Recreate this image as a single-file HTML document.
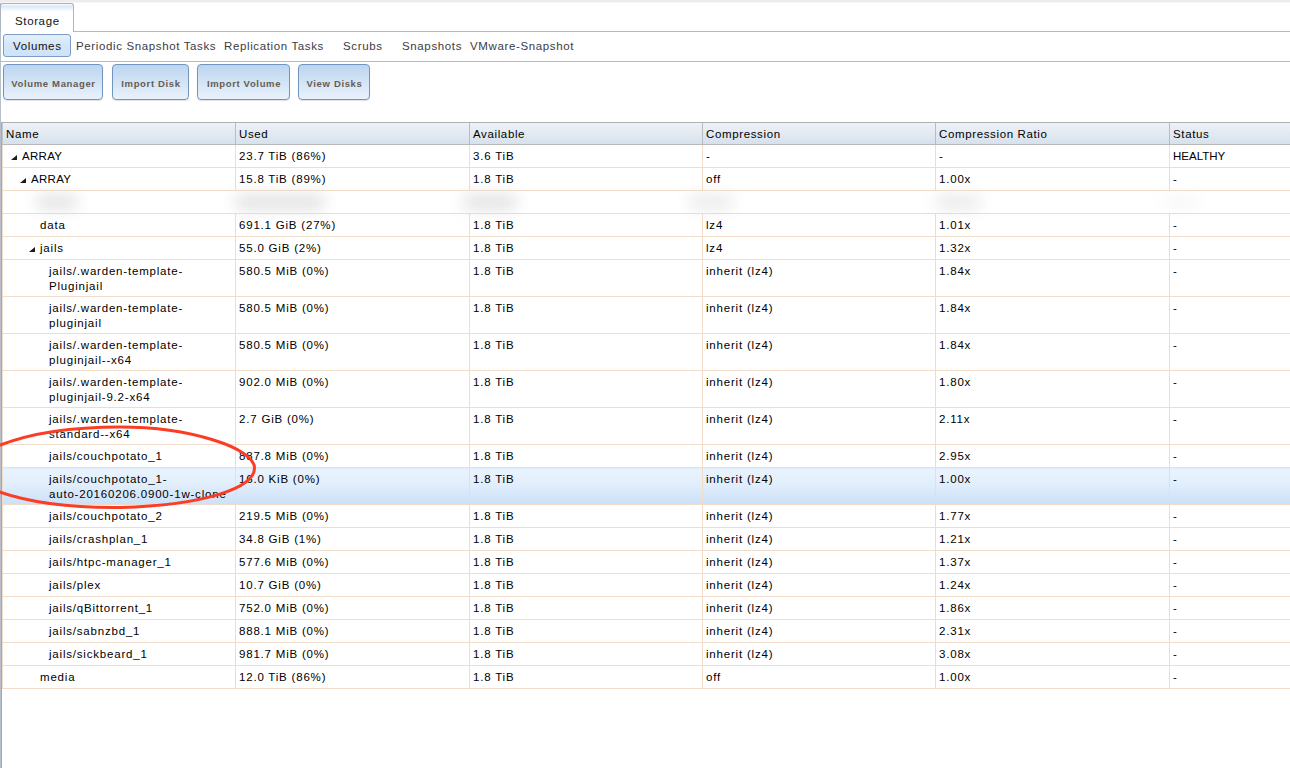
<!DOCTYPE html><html><head><meta charset="utf-8"><style>
*{margin:0;padding:0;box-sizing:border-box}
html,body{width:1290px;height:768px;overflow:hidden;background:#fff}
body{position:relative;font-family:"Liberation Sans",sans-serif;font-size:11.5px;letter-spacing:0.63px;color:#000}
.a{position:absolute;white-space:nowrap}
.topstrip{left:0;top:0;width:1290px;height:3px;background:linear-gradient(#ededed 2px,#f6f6f6 2px)}
.lbar{left:0;top:3px;width:1px;height:765px;background:#b6bfcc}
.tborder{left:1px;top:122px;width:1px;height:646px;background:#a8a8a8}
.tabline{left:73px;top:31px;width:1217px;height:1px;background:#b3bac4}
.tab{left:0px;top:3px;width:74px;height:29px;border:1px solid #aab4c2;border-bottom:none;border-radius:3px 3px 0 0;background:linear-gradient(#fff 0,#d9e8f8 2px,#f3f8fd 6px,#fff 8px,#fff)}
.tabtxt{left:15px;top:15px;color:#111}
.subline{left:0;top:61px;width:1290px;height:1px;background:#b3bac4}
.vol{left:3px;top:34px;width:68px;height:23px;border:1px solid #7b9dc6;border-radius:3px;background:linear-gradient(#e6f0fc,#d4e6f8 45%,#cfe2f7)}
.nav{top:40px;color:#3c3c44}
.btn{top:64px;padding-left:1px;height:36px;border:1px solid #7096c0;border-radius:4px;background:linear-gradient(#bcd5ef,#e9f2fc);box-shadow:0 1px 1px rgba(0,0,0,.12);font-weight:bold;font-size:9.5px;letter-spacing:0.65px;color:#665c52;text-align:center;line-height:38px}
.hdr{left:2px;top:122px;width:1288px;height:23px;border-top:1px solid #b0b0b0;border-bottom:1px solid #b8b8b8;background:linear-gradient(#eef2f9,#d7e1eb)}
.hsep{top:123px;width:1px;height:21px;background:#b9bcc1}
.htxt{top:128px;color:#000}
.rl{left:2px;width:1288px;height:1px;background:#f0dcc8}
.cl{width:1px;background:#f0dcc8}
.sel{left:2px;width:1288px;background:linear-gradient(#dcebfa 0,#e9f3fd 2px,#e3effc 40%,#cce1f9 100%)}
.tri{width:0;height:0;border-left:6px solid transparent;border-bottom:5px solid #1a1a1a}
.cell{color:#000;line-height:15px;letter-spacing:0.8px}
.blur{filter:blur(8px);background:#d4d4d4;height:12px}
</style></head><body><div class="a topstrip"></div>
<div class="a lbar"></div>
<div class="a tborder"></div>
<div class="a tabline"></div>
<div class="a tab"></div>
<div class="a tabtxt">Storage</div>
<div class="a subline"></div>
<div class="a vol"></div>
<div class="a nav" style="left:13px;color:#111">Volumes</div>
<div class="a nav" style="left:76px">Periodic Snapshot Tasks</div>
<div class="a nav" style="left:224px">Replication Tasks</div>
<div class="a nav" style="left:343px">Scrubs</div>
<div class="a nav" style="left:402px">Snapshots</div>
<div class="a nav" style="left:470px">VMware-Snapshot</div>
<div class="a btn" style="left:3px;width:100px">Volume Manager</div>
<div class="a btn" style="left:112px;width:77px">Import Disk</div>
<div class="a btn" style="left:197px;width:93px">Import Volume</div>
<div class="a btn" style="left:298px;width:72px">View Disks</div>
<div class="a hdr"></div>
<div class="a" style="left:2px;top:123px;width:1px;height:21px;background:#c4c8cc"></div>
<div class="a hsep" style="left:235px"></div>
<div class="a hsep" style="left:469px"></div>
<div class="a hsep" style="left:702px"></div>
<div class="a hsep" style="left:935px"></div>
<div class="a hsep" style="left:1169px"></div>
<div class="a htxt" style="left:6px">Name</div>
<div class="a htxt" style="left:239px">Used</div>
<div class="a htxt" style="left:473px">Available</div>
<div class="a htxt" style="left:706px">Compression</div>
<div class="a htxt" style="left:939px">Compression Ratio</div>
<div class="a htxt" style="left:1173px">Status</div>
<div class="a rl" style="top:167px"></div>
<div class="a cl" style="left:2px;top:145px;height:22px"></div>
<div class="a cl" style="left:235px;top:145px;height:22px"></div>
<div class="a cl" style="left:469px;top:145px;height:22px"></div>
<div class="a cl" style="left:702px;top:145px;height:22px"></div>
<div class="a cl" style="left:935px;top:145px;height:22px"></div>
<div class="a cl" style="left:1169px;top:145px;height:22px"></div>
<div class="a tri" style="left:11px;top:155px"></div>
<div class="a cell" style="left:22px;top:149px;letter-spacing:0.3px">ARRAY</div>
<div class="a cell" style="left:239px;top:149px">23.7 TiB (86%)</div>
<div class="a cell" style="left:473px;top:149px">3.6 TiB</div>
<div class="a cell" style="left:706px;top:149px">-</div>
<div class="a cell" style="left:939px;top:149px">-</div>
<div class="a cell" style="left:1173px;top:149px;letter-spacing:0px">HEALTHY</div>
<div class="a rl" style="top:190px"></div>
<div class="a cl" style="left:2px;top:168px;height:22px"></div>
<div class="a cl" style="left:235px;top:168px;height:22px"></div>
<div class="a cl" style="left:469px;top:168px;height:22px"></div>
<div class="a cl" style="left:702px;top:168px;height:22px"></div>
<div class="a cl" style="left:935px;top:168px;height:22px"></div>
<div class="a cl" style="left:1169px;top:168px;height:22px"></div>
<div class="a tri" style="left:20px;top:178px"></div>
<div class="a cell" style="left:31px;top:172px;letter-spacing:0.3px">ARRAY</div>
<div class="a cell" style="left:239px;top:172px">15.8 TiB (89%)</div>
<div class="a cell" style="left:473px;top:172px">1.8 TiB</div>
<div class="a cell" style="left:706px;top:172px">off</div>
<div class="a cell" style="left:939px;top:172px">1.00x</div>
<div class="a cell" style="left:1173px;top:172px">-</div>
<div class="a rl" style="top:213px"></div>
<div class="a cl" style="left:2px;top:191px;height:22px"></div>
<div class="a blur" style="left:37px;top:196px;width:40px;opacity:0.8"></div>
<div class="a blur" style="left:236px;top:196px;width:88px;opacity:0.85"></div>
<div class="a blur" style="left:464px;top:196px;width:52px;opacity:0.85"></div>
<div class="a blur" style="left:690px;top:196px;width:42px;opacity:0.6"></div>
<div class="a blur" style="left:936px;top:196px;width:44px;opacity:0.6"></div>
<div class="a blur" style="left:1164px;top:196px;width:34px;opacity:0.2"></div>
<div class="a rl" style="top:236px"></div>
<div class="a cl" style="left:2px;top:214px;height:22px"></div>
<div class="a cl" style="left:235px;top:214px;height:22px"></div>
<div class="a cl" style="left:469px;top:214px;height:22px"></div>
<div class="a cl" style="left:702px;top:214px;height:22px"></div>
<div class="a cl" style="left:935px;top:214px;height:22px"></div>
<div class="a cl" style="left:1169px;top:214px;height:22px"></div>
<div class="a cell" style="left:40px;top:218px">data</div>
<div class="a cell" style="left:239px;top:218px">691.1 GiB (27%)</div>
<div class="a cell" style="left:473px;top:218px">1.8 TiB</div>
<div class="a cell" style="left:706px;top:218px">lz4</div>
<div class="a cell" style="left:939px;top:218px">1.01x</div>
<div class="a cell" style="left:1173px;top:218px">-</div>
<div class="a rl" style="top:259px"></div>
<div class="a cl" style="left:2px;top:237px;height:22px"></div>
<div class="a cl" style="left:235px;top:237px;height:22px"></div>
<div class="a cl" style="left:469px;top:237px;height:22px"></div>
<div class="a cl" style="left:702px;top:237px;height:22px"></div>
<div class="a cl" style="left:935px;top:237px;height:22px"></div>
<div class="a cl" style="left:1169px;top:237px;height:22px"></div>
<div class="a tri" style="left:29px;top:247px"></div>
<div class="a cell" style="left:40px;top:241px">jails</div>
<div class="a cell" style="left:239px;top:241px">55.0 GiB (2%)</div>
<div class="a cell" style="left:473px;top:241px">1.8 TiB</div>
<div class="a cell" style="left:706px;top:241px">lz4</div>
<div class="a cell" style="left:939px;top:241px">1.32x</div>
<div class="a cell" style="left:1173px;top:241px">-</div>
<div class="a rl" style="top:296px"></div>
<div class="a cl" style="left:2px;top:260px;height:36px"></div>
<div class="a cl" style="left:235px;top:260px;height:36px"></div>
<div class="a cl" style="left:469px;top:260px;height:36px"></div>
<div class="a cl" style="left:702px;top:260px;height:36px"></div>
<div class="a cl" style="left:935px;top:260px;height:36px"></div>
<div class="a cl" style="left:1169px;top:260px;height:36px"></div>
<div class="a cell" style="left:49px;top:264px">jails/.warden-template-<br>Pluginjail</div>
<div class="a cell" style="left:239px;top:264px">580.5 MiB (0%)</div>
<div class="a cell" style="left:473px;top:264px">1.8 TiB</div>
<div class="a cell" style="left:706px;top:264px">inherit (lz4)</div>
<div class="a cell" style="left:939px;top:264px">1.84x</div>
<div class="a cell" style="left:1173px;top:264px">-</div>
<div class="a rl" style="top:333px"></div>
<div class="a cl" style="left:2px;top:297px;height:36px"></div>
<div class="a cl" style="left:235px;top:297px;height:36px"></div>
<div class="a cl" style="left:469px;top:297px;height:36px"></div>
<div class="a cl" style="left:702px;top:297px;height:36px"></div>
<div class="a cl" style="left:935px;top:297px;height:36px"></div>
<div class="a cl" style="left:1169px;top:297px;height:36px"></div>
<div class="a cell" style="left:49px;top:301px">jails/.warden-template-<br>pluginjail</div>
<div class="a cell" style="left:239px;top:301px">580.5 MiB (0%)</div>
<div class="a cell" style="left:473px;top:301px">1.8 TiB</div>
<div class="a cell" style="left:706px;top:301px">inherit (lz4)</div>
<div class="a cell" style="left:939px;top:301px">1.84x</div>
<div class="a cell" style="left:1173px;top:301px">-</div>
<div class="a rl" style="top:370px"></div>
<div class="a cl" style="left:2px;top:334px;height:36px"></div>
<div class="a cl" style="left:235px;top:334px;height:36px"></div>
<div class="a cl" style="left:469px;top:334px;height:36px"></div>
<div class="a cl" style="left:702px;top:334px;height:36px"></div>
<div class="a cl" style="left:935px;top:334px;height:36px"></div>
<div class="a cl" style="left:1169px;top:334px;height:36px"></div>
<div class="a cell" style="left:49px;top:338px">jails/.warden-template-<br>pluginjail--x64</div>
<div class="a cell" style="left:239px;top:338px">580.5 MiB (0%)</div>
<div class="a cell" style="left:473px;top:338px">1.8 TiB</div>
<div class="a cell" style="left:706px;top:338px">inherit (lz4)</div>
<div class="a cell" style="left:939px;top:338px">1.84x</div>
<div class="a cell" style="left:1173px;top:338px">-</div>
<div class="a rl" style="top:407px"></div>
<div class="a cl" style="left:2px;top:371px;height:36px"></div>
<div class="a cl" style="left:235px;top:371px;height:36px"></div>
<div class="a cl" style="left:469px;top:371px;height:36px"></div>
<div class="a cl" style="left:702px;top:371px;height:36px"></div>
<div class="a cl" style="left:935px;top:371px;height:36px"></div>
<div class="a cl" style="left:1169px;top:371px;height:36px"></div>
<div class="a cell" style="left:49px;top:375px">jails/.warden-template-<br>pluginjail-9.2-x64</div>
<div class="a cell" style="left:239px;top:375px">902.0 MiB (0%)</div>
<div class="a cell" style="left:473px;top:375px">1.8 TiB</div>
<div class="a cell" style="left:706px;top:375px">inherit (lz4)</div>
<div class="a cell" style="left:939px;top:375px">1.80x</div>
<div class="a cell" style="left:1173px;top:375px">-</div>
<div class="a rl" style="top:444px"></div>
<div class="a cl" style="left:2px;top:408px;height:36px"></div>
<div class="a cl" style="left:235px;top:408px;height:36px"></div>
<div class="a cl" style="left:469px;top:408px;height:36px"></div>
<div class="a cl" style="left:702px;top:408px;height:36px"></div>
<div class="a cl" style="left:935px;top:408px;height:36px"></div>
<div class="a cl" style="left:1169px;top:408px;height:36px"></div>
<div class="a cell" style="left:49px;top:412px">jails/.warden-template-<br>standard--x64</div>
<div class="a cell" style="left:239px;top:412px">2.7 GiB (0%)</div>
<div class="a cell" style="left:473px;top:412px">1.8 TiB</div>
<div class="a cell" style="left:706px;top:412px">inherit (lz4)</div>
<div class="a cell" style="left:939px;top:412px">2.11x</div>
<div class="a cell" style="left:1173px;top:412px">-</div>
<div class="a rl" style="top:467px"></div>
<div class="a cl" style="left:2px;top:445px;height:22px"></div>
<div class="a cl" style="left:235px;top:445px;height:22px"></div>
<div class="a cl" style="left:469px;top:445px;height:22px"></div>
<div class="a cl" style="left:702px;top:445px;height:22px"></div>
<div class="a cl" style="left:935px;top:445px;height:22px"></div>
<div class="a cl" style="left:1169px;top:445px;height:22px"></div>
<div class="a cell" style="left:49px;top:449px">jails/couchpotato_1</div>
<div class="a cell" style="left:239px;top:449px">887.8 MiB (0%)</div>
<div class="a cell" style="left:473px;top:449px">1.8 TiB</div>
<div class="a cell" style="left:706px;top:449px">inherit (lz4)</div>
<div class="a cell" style="left:939px;top:449px">2.95x</div>
<div class="a cell" style="left:1173px;top:449px">-</div>
<div class="a sel" style="top:468px;height:36px"></div>
<div class="a rl" style="top:504px"></div>
<div class="a cl" style="left:2px;top:468px;height:36px"></div>
<div class="a cl" style="left:235px;top:468px;height:36px"></div>
<div class="a cl" style="left:469px;top:468px;height:36px"></div>
<div class="a cl" style="left:702px;top:468px;height:36px"></div>
<div class="a cl" style="left:935px;top:468px;height:36px"></div>
<div class="a cl" style="left:1169px;top:468px;height:36px"></div>
<div class="a cell" style="left:49px;top:472px">jails/couchpotato_1-<br>auto-20160206.0900-1w-clone</div>
<div class="a cell" style="left:239px;top:472px">16.0 KiB (0%)</div>
<div class="a cell" style="left:473px;top:472px">1.8 TiB</div>
<div class="a cell" style="left:706px;top:472px">inherit (lz4)</div>
<div class="a cell" style="left:939px;top:472px">1.00x</div>
<div class="a cell" style="left:1173px;top:472px">-</div>
<div class="a rl" style="top:527px"></div>
<div class="a cl" style="left:2px;top:505px;height:22px"></div>
<div class="a cl" style="left:235px;top:505px;height:22px"></div>
<div class="a cl" style="left:469px;top:505px;height:22px"></div>
<div class="a cl" style="left:702px;top:505px;height:22px"></div>
<div class="a cl" style="left:935px;top:505px;height:22px"></div>
<div class="a cl" style="left:1169px;top:505px;height:22px"></div>
<div class="a cell" style="left:49px;top:509px">jails/couchpotato_2</div>
<div class="a cell" style="left:239px;top:509px">219.5 MiB (0%)</div>
<div class="a cell" style="left:473px;top:509px">1.8 TiB</div>
<div class="a cell" style="left:706px;top:509px">inherit (lz4)</div>
<div class="a cell" style="left:939px;top:509px">1.77x</div>
<div class="a cell" style="left:1173px;top:509px">-</div>
<div class="a rl" style="top:550px"></div>
<div class="a cl" style="left:2px;top:528px;height:22px"></div>
<div class="a cl" style="left:235px;top:528px;height:22px"></div>
<div class="a cl" style="left:469px;top:528px;height:22px"></div>
<div class="a cl" style="left:702px;top:528px;height:22px"></div>
<div class="a cl" style="left:935px;top:528px;height:22px"></div>
<div class="a cl" style="left:1169px;top:528px;height:22px"></div>
<div class="a cell" style="left:49px;top:532px">jails/crashplan_1</div>
<div class="a cell" style="left:239px;top:532px">34.8 GiB (1%)</div>
<div class="a cell" style="left:473px;top:532px">1.8 TiB</div>
<div class="a cell" style="left:706px;top:532px">inherit (lz4)</div>
<div class="a cell" style="left:939px;top:532px">1.21x</div>
<div class="a cell" style="left:1173px;top:532px">-</div>
<div class="a rl" style="top:573px"></div>
<div class="a cl" style="left:2px;top:551px;height:22px"></div>
<div class="a cl" style="left:235px;top:551px;height:22px"></div>
<div class="a cl" style="left:469px;top:551px;height:22px"></div>
<div class="a cl" style="left:702px;top:551px;height:22px"></div>
<div class="a cl" style="left:935px;top:551px;height:22px"></div>
<div class="a cl" style="left:1169px;top:551px;height:22px"></div>
<div class="a cell" style="left:49px;top:555px">jails/htpc-manager_1</div>
<div class="a cell" style="left:239px;top:555px">577.6 MiB (0%)</div>
<div class="a cell" style="left:473px;top:555px">1.8 TiB</div>
<div class="a cell" style="left:706px;top:555px">inherit (lz4)</div>
<div class="a cell" style="left:939px;top:555px">1.37x</div>
<div class="a cell" style="left:1173px;top:555px">-</div>
<div class="a rl" style="top:596px"></div>
<div class="a cl" style="left:2px;top:574px;height:22px"></div>
<div class="a cl" style="left:235px;top:574px;height:22px"></div>
<div class="a cl" style="left:469px;top:574px;height:22px"></div>
<div class="a cl" style="left:702px;top:574px;height:22px"></div>
<div class="a cl" style="left:935px;top:574px;height:22px"></div>
<div class="a cl" style="left:1169px;top:574px;height:22px"></div>
<div class="a cell" style="left:49px;top:578px">jails/plex</div>
<div class="a cell" style="left:239px;top:578px">10.7 GiB (0%)</div>
<div class="a cell" style="left:473px;top:578px">1.8 TiB</div>
<div class="a cell" style="left:706px;top:578px">inherit (lz4)</div>
<div class="a cell" style="left:939px;top:578px">1.24x</div>
<div class="a cell" style="left:1173px;top:578px">-</div>
<div class="a rl" style="top:619px"></div>
<div class="a cl" style="left:2px;top:597px;height:22px"></div>
<div class="a cl" style="left:235px;top:597px;height:22px"></div>
<div class="a cl" style="left:469px;top:597px;height:22px"></div>
<div class="a cl" style="left:702px;top:597px;height:22px"></div>
<div class="a cl" style="left:935px;top:597px;height:22px"></div>
<div class="a cl" style="left:1169px;top:597px;height:22px"></div>
<div class="a cell" style="left:49px;top:601px">jails/qBittorrent_1</div>
<div class="a cell" style="left:239px;top:601px">752.0 MiB (0%)</div>
<div class="a cell" style="left:473px;top:601px">1.8 TiB</div>
<div class="a cell" style="left:706px;top:601px">inherit (lz4)</div>
<div class="a cell" style="left:939px;top:601px">1.86x</div>
<div class="a cell" style="left:1173px;top:601px">-</div>
<div class="a rl" style="top:642px"></div>
<div class="a cl" style="left:2px;top:620px;height:22px"></div>
<div class="a cl" style="left:235px;top:620px;height:22px"></div>
<div class="a cl" style="left:469px;top:620px;height:22px"></div>
<div class="a cl" style="left:702px;top:620px;height:22px"></div>
<div class="a cl" style="left:935px;top:620px;height:22px"></div>
<div class="a cl" style="left:1169px;top:620px;height:22px"></div>
<div class="a cell" style="left:49px;top:624px">jails/sabnzbd_1</div>
<div class="a cell" style="left:239px;top:624px">888.1 MiB (0%)</div>
<div class="a cell" style="left:473px;top:624px">1.8 TiB</div>
<div class="a cell" style="left:706px;top:624px">inherit (lz4)</div>
<div class="a cell" style="left:939px;top:624px">2.31x</div>
<div class="a cell" style="left:1173px;top:624px">-</div>
<div class="a rl" style="top:665px"></div>
<div class="a cl" style="left:2px;top:643px;height:22px"></div>
<div class="a cl" style="left:235px;top:643px;height:22px"></div>
<div class="a cl" style="left:469px;top:643px;height:22px"></div>
<div class="a cl" style="left:702px;top:643px;height:22px"></div>
<div class="a cl" style="left:935px;top:643px;height:22px"></div>
<div class="a cl" style="left:1169px;top:643px;height:22px"></div>
<div class="a cell" style="left:49px;top:647px">jails/sickbeard_1</div>
<div class="a cell" style="left:239px;top:647px">981.7 MiB (0%)</div>
<div class="a cell" style="left:473px;top:647px">1.8 TiB</div>
<div class="a cell" style="left:706px;top:647px">inherit (lz4)</div>
<div class="a cell" style="left:939px;top:647px">3.08x</div>
<div class="a cell" style="left:1173px;top:647px">-</div>
<div class="a rl" style="top:688px"></div>
<div class="a cl" style="left:2px;top:666px;height:22px"></div>
<div class="a cl" style="left:235px;top:666px;height:22px"></div>
<div class="a cl" style="left:469px;top:666px;height:22px"></div>
<div class="a cl" style="left:702px;top:666px;height:22px"></div>
<div class="a cl" style="left:935px;top:666px;height:22px"></div>
<div class="a cl" style="left:1169px;top:666px;height:22px"></div>
<div class="a cell" style="left:40px;top:670px">media</div>
<div class="a cell" style="left:239px;top:670px">12.0 TiB (86%)</div>
<div class="a cell" style="left:473px;top:670px">1.8 TiB</div>
<div class="a cell" style="left:706px;top:670px">off</div>
<div class="a cell" style="left:939px;top:670px">1.00x</div>
<div class="a cell" style="left:1173px;top:670px">-</div>
<svg class="a" style="left:0;top:0" width="1290" height="768"><path d="M-2,446 C30,433 70,427 120,427 C190,427 254.5,448 254.5,468 C254.5,488 205,505 120,507.5 C70,508 30,503 -2,491.5" fill="none" stroke="#fb3d25" stroke-width="3"/></svg></body></html>
